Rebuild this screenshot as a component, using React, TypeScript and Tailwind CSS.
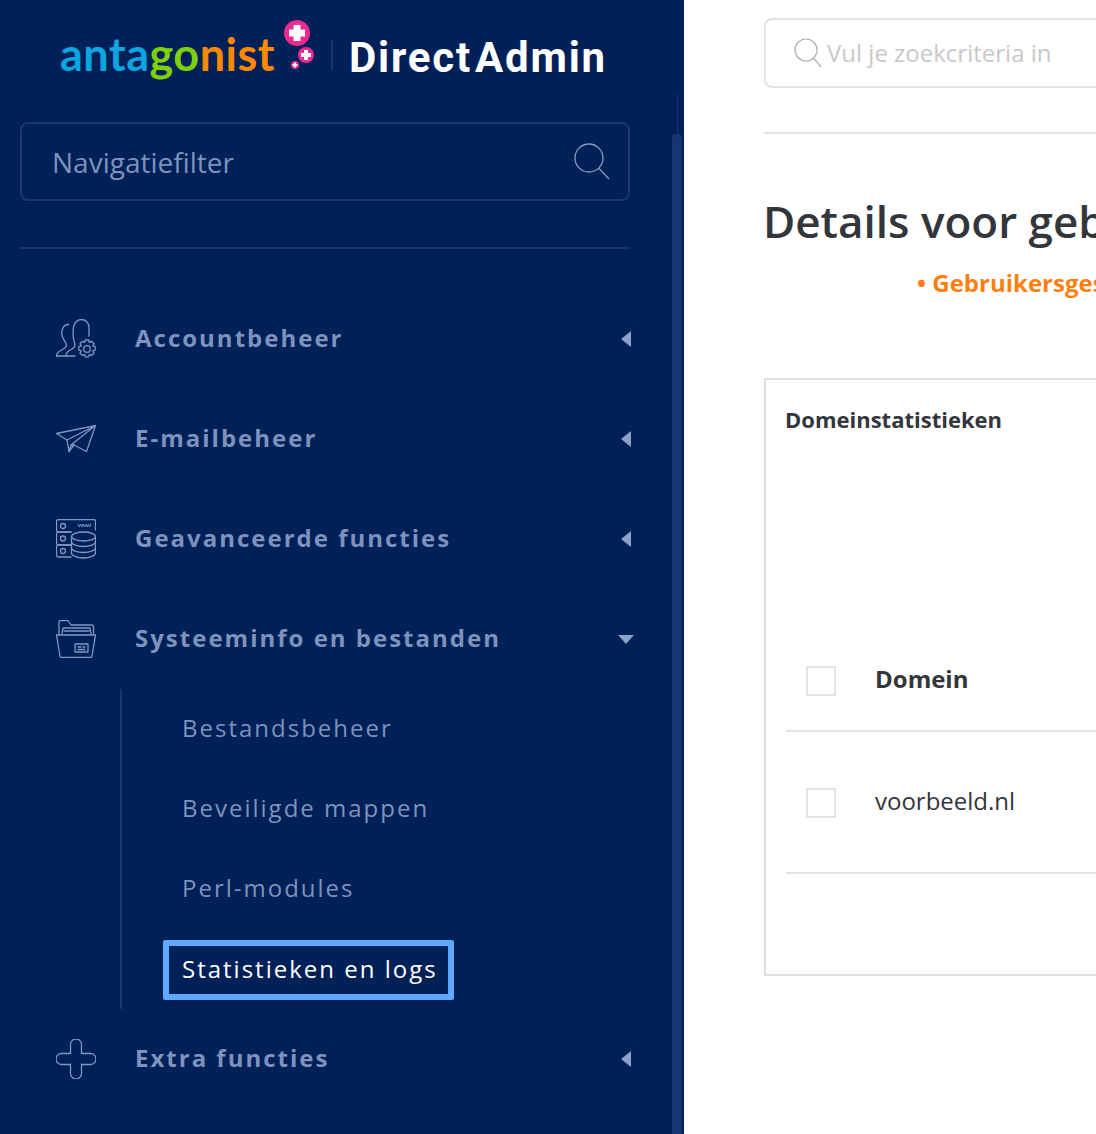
import React from "react";

const Caret = () => (
  <svg width="10" height="16" viewBox="0 0 10 16" className="shrink-0"><path d="M10 0V16L0 8Z" fill="#8ea2c8" /></svg>
);
const CaretDown = () => (
  <svg width="16" height="9" viewBox="0 0 16 9" className="shrink-0"><path d="M0 0H16L8 9Z" fill="#8ea2c8" /></svg>
);

const s = { fill: "none", stroke: "#8197c2", strokeWidth: 1.3, strokeLinejoin: "round" as const, strokeLinecap: "round" as const };

const AccountIcon = () => (
  <svg width="40" height="40" viewBox="0 0 40 40" {...s}>
    <path d="M0.500 37c0-3 2-4.500 5-6 3-1.500 5-3 5-5 0-2-3-5-4-8-1-3-1-6 0-8 1-3 3-4.500 6-4.500" />
    <path d="M0.500 37H19" />
    <path d="M10 37c0-3 2-5 5-6.500 3-1.500 4-3 4-4.500 0-2-1-3-1.500-6-.5-3-.5-8 0-12 .5-4 4-7.500 8-7.500s7.500 3.500 7.500 7.500v9" />
    <circle cx="31" cy="30" r="3.300" />
    <path d="M29.300 21h3.400l.6 2.300 2.300-1 2.400 2.400-1.200 2.200 2.400.8v3.400l-2.400.8 1.200 2.200-2.400 2.400-2.300-1.100-.6 2.400h-3.400l-.6-2.400-2.300 1.100-2.400-2.400 1.200-2.200-2.400-.8v-3.400l2.400-.8-1.200-2.200 2.400-2.400 2.300 1z" />
  </svg>
);
const PlaneIcon = () => (
  <svg width="40" height="28" viewBox="0 0 40 28" {...s}>
    <path d="M0.500 8.500L39.500 0.500L30.500 26.500L18 20L13 26.500L11 15Z" />
    <path d="M39.500 0.500L11 15" />
    <path d="M39.500 0.500L15 20L18 20" />
    <path d="M15 20L13 26.500" />
  </svg>
);
const ServerIcon = () => (
  <svg width="40" height="40" viewBox="0 0 40 40" {...s}>
    <path d="M15 13H2.500a2 2 0 0 1-2-2V2.500a2 2 0 0 1 2-2h35a2 2 0 0 1 2 2V11" />
    <path d="M15 13H2.500a2 2 0 0 0-2 2v9a2 2 0 0 0 2 2H15" />
    <path d="M15 26H2.500a2 2 0 0 0-2 2v8a2 2 0 0 0 2 2H15" />
    <circle cx="7" cy="7" r="2.500" />
    <circle cx="7" cy="19.500" r="2.500" />
    <circle cx="7" cy="32" r="2.500" />
    <path strokeWidth="0.900" d="M22 5l1.300 3 1.300-3 1.300 3 1.300-3 1.300 3 1.300-3 1.300 3 1.300-3 1.300 3 1.300-3" />
    <ellipse cx="27.500" cy="17.500" rx="12" ry="4.500" />
    <path d="M15.500 17.500V34c0 2.500 5.500 5 12 5s12-2.500 12-5V17.500" />
    <path d="M15.500 23c0 2.500 5.500 4.500 12 4.500s12-2 12-4.500" />
    <path d="M15.500 29c0 2.500 5.500 4.500 12 4.500s12-2 12-4.500" />
  </svg>
);
const FolderIcon = () => (
  <svg width="40" height="38" viewBox="0 0 40 38" {...s}>
    <path d="M3 14V2a1.500 1.500 0 0 1 1.500-1.500H12L15 5H36a1.500 1.500 0 0 1 1.500 1.500V14" />
    <path d="M6 14L7 8H34L35 14" />
    <path d="M8 11H33" />
    <path d="M0.500 15H39.500L36 36a1.500 1.500 0 0 1-1.500 1.500H5.500A1.500 1.500 0 0 1 4 36Z" />
    <rect x="19" y="24" width="13" height="8" />
    <path d="M22 27h3M27 27h2M22 29.500h7" />
  </svg>
);
const PlusIcon = () => (
  <svg width="40" height="40" viewBox="0 0 40 40" fill="none" stroke="#8197c2" strokeWidth="1.300">
    <path d="M14.500 14.500V5.500a5 5 0 0 1 11 0V14.500H34.500a5 5 0 0 1 0 11H25.500V34.500a5 5 0 0 1-11 0V25.500H5.500a5 5 0 0 1 0-11Z" />
  </svg>
);

const NavRow = ({ icon, label, open }: { icon: React.ReactNode; label: string; open?: boolean }) => (
  <div className="flex h-[100px] items-center">
    <div className="flex w-[115px] shrink-0 justify-start pl-9">{icon}</div>
    <span className="mb-[2px] flex-1 text-[24px] font-bold tracking-[2px] text-[#7d93bd]">{label}</span>
    <div className={open ? "flex w-[16px] -mr-[4px] justify-end" : "flex w-[10px] -mr-[1px] justify-end"}>
      {open ? <CaretDown /> : <Caret />}
    </div>
  </div>
);

const SubRow = ({ label }: { label: string }) => (
  <div className="flex h-20 items-center pb-[2px] pl-[60px] text-[24px] tracking-[2px] text-[#7d93bd]">{label}</div>
);

const Logo = () => (
  <div className="flex h-[122px] items-start pl-[60px] pt-[20px]">
    <span className="mt-[1px] w-[217px] text-[45px] font-bold leading-[66px] tracking-[0.500px] whitespace-nowrap" style={{ fontFamily: "Lato, sans-serif" }}>
      <span className="text-[#0da5e0]">anta</span>
      <span className="text-[#7ed00a]">go</span>
      <span className="text-[#ff8a00]">nist</span>
    </span>
    <svg width="44" height="56" viewBox="0 0 44 56" className="shrink-0">
      <circle cx="20" cy="13" r="13" fill="#ec2a8f" />
      <path d="M16.500 5h7v4.500H28v7h-4.500V21h-7v-4.500H12v-7h4.500z" fill="#fff" />
      <circle cx="29" cy="35" r="8" fill="#ec2a8f" />
      <path d="M27 30h4v3h3v4h-3v3h-4v-3h-3v-4h3z" fill="#fff" />
      <circle cx="18" cy="45" r="4" fill="#ec2a8f" />
      <path d="M17 42.500h2v1.500h1.500v2H19v1.500h-2V46h-1.500v-2H17z" fill="#fff" />
    </svg>
    <div className="ml-[10px] mt-[20px] h-[31px] w-[2px] bg-[#1a3670]" />
    <span className="ml-[16px] mt-[15px] text-[42px] font-bold leading-[45px] tracking-[1.800px] text-white whitespace-nowrap" style={{ fontFamily: "Roboto, sans-serif" }}>
      Direct<span className="ml-[3px]">Admin</span>
    </span>
  </div>
);

export default function App() {
  return (
    <div className="flex h-[1134px] w-[1096px] overflow-hidden bg-white" style={{ fontFamily: '"Open Sans", sans-serif' }}>
      <aside className="relative h-full w-[684px] shrink-0 bg-[#002058] px-5">
        <div className="w-[610px]">
          <div className="-mx-5"><Logo /></div>
          <div className="flex h-[79px] items-center justify-between rounded-lg border-2 border-[#1a3670] pl-[30px] pr-[18px]">
            <span className="text-[28px] text-[#7d93bd]">Navigatiefilter</span>
            <svg width="36" height="38" viewBox="0 0 36 38" fill="none" stroke="#8a9bbd" strokeWidth="1.300">
              <circle cx="15" cy="15" r="14" />
              <path d="M25 25.500L35 36" />
            </svg>
          </div>
          <div className="mt-[46px] h-[2px] bg-[#1a3670]" />
          <nav className="mt-[40px]">
            <NavRow icon={<AccountIcon />} label="Accountbeheer" />
            <NavRow icon={<PlaneIcon />} label="E-mailbeheer" />
            <NavRow icon={<ServerIcon />} label="Geavanceerde functies" />
            <NavRow icon={<FolderIcon />} label="Systeeminfo en bestanden" open />
            <div className="ml-[100px] border-l-2 border-[#1a3670]">
              <SubRow label="Bestandsbeheer" />
              <SubRow label="Beveiligde mappen" />
              <SubRow label="Perl-modules" />
              <div className="flex h-20 items-end pb-[9px] pl-[41px]">
                <div className="flex h-[60px] w-[291px] items-center rounded-[2px] border-[6px] border-[#5fa8ff] pb-[3px] pl-[13px] text-[24px] tracking-[2px] text-white whitespace-nowrap">
                  Statistieken en logs
                </div>
              </div>
            </div>
            <NavRow icon={<PlusIcon />} label="Extra functies" />
          </nav>
        </div>
        <div className="absolute left-[677px] top-[94px] h-[39px] w-[1px] bg-[#1a3670]" />
        <div className="absolute bottom-0 left-[672px] top-[134px] w-[10px] rounded-t-[4px] bg-[#173570]" />
      </aside>

      <main className="min-w-0 flex-1 overflow-hidden pl-20 pt-[18px]">
        <div className="w-[1000px] text-[#33363b]">
          <div className="flex h-[70px] items-center rounded-lg border-2 border-[#e2e2e2] pl-7">
            <svg width="28" height="31" viewBox="0 0 28 31" fill="none" stroke="#b0b0b0" strokeWidth="1.200" className="shrink-0">
              <circle cx="12" cy="12" r="11" />
              <path d="M20 20.500L27 29" />
            </svg>
            <span className="ml-[5px] text-[24px] text-[#c8c8c8]">Vul je zoekcriteria in</span>
          </div>
          <div className="mt-[44px] h-[2px] bg-[#e2e2e2]" />
          <h1 className="mt-[55px] -ml-[1px] text-[44px] font-semibold leading-[64px] whitespace-nowrap">Details voor gebruiker voorbeeld</h1>
          <p className="ml-[153px] mt-[13px] text-[24px] font-bold leading-[34px] text-[#ff7f0e] whitespace-nowrap">• Gebruikersgestatistieken</p>
          <section className="mt-[78px] h-[598px] border-2 border-[#e0e0e0] pl-5">
            <h2 className="mt-[23px] -ml-[1px] text-[22px] font-bold leading-[32px]">Domeinstatistieken</h2>
            <div className="mt-[197px] flex h-[100px] items-start border-b-2 border-[#e2e2e2] pl-5 pt-[34px]">
              <div className="h-[30px] w-[30px] border-2 border-[#e2e2e2]" />
              <span className="ml-[39px] -mt-[1px] text-[24px] font-bold leading-[28px]">Domein</span>
            </div>
            <div className="flex h-[142px] items-start border-b-2 border-[#e2e2e2] pl-5 pt-[56px]">
              <div className="h-[30px] w-[30px] border-2 border-[#e2e2e2]" />
              <span className="ml-[39px] -mt-[1px] text-[24px] leading-[28px]">voorbeeld.nl</span>
            </div>
          </section>
        </div>
      </main>
    </div>
  );
}
